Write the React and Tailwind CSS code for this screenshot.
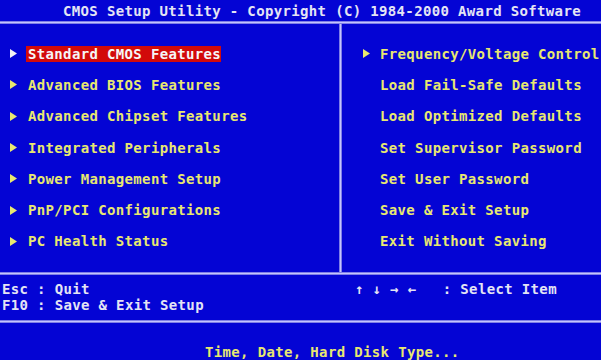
const leftItems = [
  'Standard CMOS Features',
  'Advanced BIOS Features',
  'Advanced Chipset Features',
  'Integrated Peripherals',
  'Power Management Setup',
  'PnP/PCI Configurations',
  'PC Health Status',
];

const rightItems = [
  { label: 'Frequency/Voltage Control', arrow: true },
  { label: 'Load Fail-Safe Defaults' },
  { label: 'Load Optimized Defaults' },
  { label: 'Set Supervisor Password' },
  { label: 'Set User Password' },
  { label: 'Save & Exit Setup' },
  { label: 'Exit Without Saving' },
];

function Arrow({ white }) {
  return (
    <svg width="7" height="9" viewBox="0 0 7 9" className="shrink-0">
      <polygon points="0,0 7,4.5 0,9" fill={white ? '#f4f4f4' : '#e8e870'} />
    </svg>
  );
}

function HLine() {
  return <div className="h-[3px] w-full border-y border-[#7f7fe6] bg-[#c4c4ff]" />;
}

export default function App() {
  return (
    <div className="w-[601px] h-[360px] overflow-hidden bg-[#0404d4] font-['DejaVu_Sans_Mono',monospace] font-bold text-[14px] tracking-[0.35px] leading-[16px]">
      <div className="h-[21px] pl-[63px] pt-[0px] flex items-center text-[#e4e4f4] whitespace-pre">
        CMOS Setup Utility - Copyright (C) 1984-2000 Award Software
      </div>
      <HLine />

      <div className="flex h-[248px]">
        <div className="w-[339px] pt-[14px]">
          {leftItems.map((item, i) => (
            <div key={item} className="h-[31.3px] flex items-center whitespace-pre">
              <div className="w-[26px] pl-[10px] flex">
                <Arrow white={i === 0} />
              </div>
              {i === 0 ? (
                <span className="bg-[#d20a0a] text-[#f6f6f6] pl-[2px] h-[16px] flex items-center">{item}</span>
              ) : (
                <span className="pl-[2px] text-[#e8e870]">{item}</span>
              )}
            </div>
          ))}
        </div>
        <div className="w-[3px] border-x border-[#7f7fe6] bg-[#c4c4ff]" />
        <div className="flex-1 pt-[14px]">
          {rightItems.map((item) => (
            <div key={item.label} className="h-[31.3px] flex items-center whitespace-pre">
              <div className="w-[38px] pl-[21px] flex">
                {item.arrow && <Arrow />}
              </div>
              <span className="text-[#e8e870]">{item.label}</span>
            </div>
          ))}
        </div>
      </div>
      <HLine />

      <div className="flex h-[45px] pt-[6px] text-[#e4e4f4] whitespace-pre">
        <div className="w-[342px] pl-[2px]">
          <div>Esc : Quit</div>
          <div>F10 : Save &amp; Exit Setup</div>
        </div>
        <div className="pl-[13px]">↑ ↓ → ←   : Select Item</div>
      </div>
      <HLine />

      <div className="pt-[21px] pl-[205px] text-[#e8e870] whitespace-pre">
        Time, Date, Hard Disk Type...
      </div>
    </div>
  );
}
